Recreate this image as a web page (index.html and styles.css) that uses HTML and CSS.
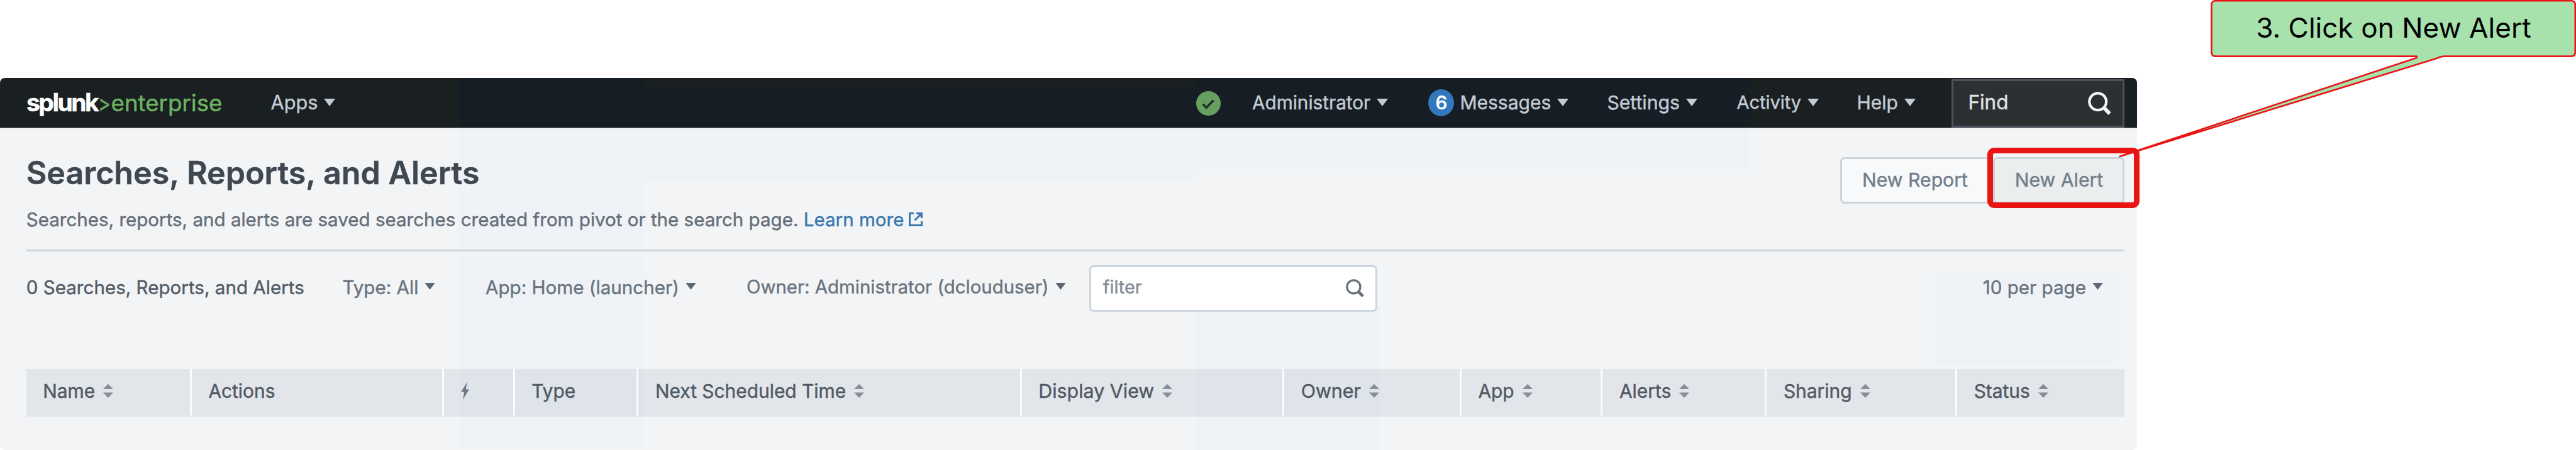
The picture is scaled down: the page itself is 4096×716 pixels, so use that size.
FILE: index.html
```html
<!DOCTYPE html>
<html lang="en">
<head>
<meta charset="utf-8">
<title>Searches, Reports, and Alerts</title>
<link rel="stylesheet" href="styles.css">
</head>
<body>
<svg class="symbols" width="0" height="0" aria-hidden="true">
  <symbol id="caret" viewBox="0 0 18 12"><path d="M0 0h18L9 12z" fill="currentColor"/></symbol>
  <symbol id="sort" viewBox="0 0 16 22"><path d="M0 8h16L8 0zM0 13.5h16L8 22z" fill="currentColor"/></symbol>
  <symbol id="search" viewBox="0 0 38 38"><ellipse cx="15.7" cy="15.7" rx="13.4" ry="13.4" fill="none" stroke="currentColor" stroke-width="4.2"/><path d="M25 25l9.5 9.8" fill="none" stroke="currentColor" stroke-width="6"/></symbol>
</svg>
<div class="page">
  <div class="app">
    <nav class="nav">
      <a class="logo"><span class="logo-brand">splunk</span><span class="logo-mark">&gt;</span><span class="logo-product">enterprise</span></a>
      <a class="nav-item apps">Apps<svg class="caret"><use href="#caret"/></svg></a>
      <svg class="health" viewBox="0 0 39 39"><circle cx="19.5" cy="19.5" r="19.5" fill="#669f60"/><path d="M10.6 20.8l5.6 5.4 11.4-11.8" fill="none" stroke="#20302a" stroke-width="3.6"/></svg>
      <a class="nav-item admin">Administrator<svg class="caret"><use href="#caret"/></svg></a>
      <span class="count-badge">6</span>
      <a class="nav-item">Messages<svg class="caret"><use href="#caret"/></svg></a>
      <a class="nav-item settings">Settings<svg class="caret"><use href="#caret"/></svg></a>
      <a class="nav-item activity">Activity<svg class="caret"><use href="#caret"/></svg></a>
      <a class="nav-item">Help<svg class="caret"><use href="#caret"/></svg></a>
      <div class="find">Find<svg class="find-icon"><use href="#search"/></svg></div>
    </nav>
    <main class="main">
      <header class="heading">
        <div class="heading-text">
          <h1 class="title">Searches, Reports, and Alerts</h1>
          <p class="desc">Searches, reports, and alerts are saved searches created from pivot or the search page. <a class="link">Learn more<svg class="external" viewBox="0 0 22 22"><path d="M8 1.5H1.500v19h19V14M9.500 12.500L19 3M12 1.500h8.500V9" fill="none" stroke="currentColor" stroke-width="3"/><path d="M13 1h8v8z" fill="currentColor"/></svg></a></p>
        </div>
        <div class="actions">
          <div class="btn btn-report">New Report</div>
          <div class="btn btn-alert">New Alert<span class="highlight"></span></div>
        </div>
      </header>
      <div class="filters">
        <span class="total">0 Searches, Reports, and Alerts</span>
        <span class="filter">Type: All<svg class="caret"><use href="#caret"/></svg></span>
        <span class="filter">App: Home (launcher)<svg class="caret"><use href="#caret"/></svg></span>
        <span class="filter owner">Owner: Administrator (dclouduser)<svg class="caret"><use href="#caret"/></svg></span>
        <div class="filter-box">filter<svg class="filter-icon"><use href="#search"/></svg></div>
        <span class="filter per-page">10 per page<svg class="caret"><use href="#caret"/></svg></span>
      </div>
      <div class="table-head">
        <div class="th">Name<svg class="sort"><use href="#sort"/></svg></div>
        <div class="th">Actions</div>
        <div class="th"><svg class="bolt" viewBox="0 0 13 28"><path d="M10 0L0 15.500h5.200L3 28l10-16.500H7.600z" fill="#6c7687"/></svg></div>
        <div class="th">Type</div>
        <div class="th">Next Scheduled Time<svg class="sort"><use href="#sort"/></svg></div>
        <div class="th wide">Display View<svg class="sort"><use href="#sort"/></svg></div>
        <div class="th wide">Owner<svg class="sort"><use href="#sort"/></svg></div>
        <div class="th">App<svg class="sort"><use href="#sort"/></svg></div>
        <div class="th">Alerts<svg class="sort"><use href="#sort"/></svg></div>
        <div class="th">Sharing<svg class="sort"><use href="#sort"/></svg></div>
        <div class="th">Status<svg class="sort"><use href="#sort"/></svg></div>
      </div>
    </main>
  </div>
  <svg class="callout-shape" viewBox="0 0 4096 716"><path d="M3523 1.200H4088Q4094.800 1.200 4094.800 8V83Q4094.800 89.600 4088 89.600H3886Q3880 89.600 3874 93L3369.500 249.200L3841 92.500Q3845 90.500 3842 89.600H3523Q3516.500 89.600 3516.500 83V8Q3516.500 1.200 3523 1.200Z" fill="#a7e2ad" stroke="#e91414" stroke-width="2.600" stroke-linejoin="bevel"/></svg>
  <div class="callout">3. Click on New Alert</div>
</div>
</body>
</html>
```
FILE: styles.css
```css
* { box-sizing: border-box; }
body { margin: 0; background: #fff; font-family: Inter, "Liberation Sans", sans-serif; }
.symbols { position: absolute; }
svg { flex: none; display: block; }
.page { position: relative; width: 4096px; height: 716px; padding-top: 124px; overflow: hidden; }

.app {
  width: 3397.5px; height: 591.5px; border-radius: 8px;
  -webkit-text-stroke: .45px;
  background:
    linear-gradient(#eff3f8, #eff3f8) 730px 79px / 293px 508px no-repeat,
    linear-gradient(#eff3f8, #eff3f8) 1023px 79px / 878px 84px no-repeat,
    linear-gradient(#eff3f8, #eff3f8) 1901px 79px / 881px 68px no-repeat,
    linear-gradient(#eff3f8, #eff3f8) 1901px 361px / 293px 231px no-repeat,
    linear-gradient(#eff3f8, #eff3f8) 3075px 310px / 293px 147px no-repeat,
    #f2f4f6;
}

.nav {
  display: grid; align-items: center; height: 79.5px; padding: 0 0 6px 42px;
  grid-template-columns: 388.5px 1471.5px 89px 280.4px 50px 234px 206px 191px 151px 275px;
  border-bottom: 1px solid #80858a; border-radius: 8px 8px 0 0;
  color: #c3cbd4; font-size: 30px; line-height: 36px;
  background:
    linear-gradient(#1a1f21, #1a1f21) 1023px 0 / 878px 15px no-repeat,
    linear-gradient(#161d24, #161d24) 730px 0 / 2052px 100% no-repeat,
    #1a1f22;
}
.nav-item { display: flex; align-items: center; gap: 10px; white-space: nowrap; }
.caret { width: 18px; height: 12px; }
.apps { font-size: 30.7px; }
.admin { font-size: 29.7px; }
.settings { font-size: 30.2px; }
.activity { font-size: 29px; }
.logo { display: flex; align-items: baseline; font-size: 36.7px; line-height: 44px; padding-top: 1px; white-space: nowrap; }
.logo-brand { color: #fff; font-weight: 700; font-size: 39px; letter-spacing: -2.5px; width: 113.5px; }
.logo-mark { color: #65a958; width: 21px; transform: scaleX(.82); transform-origin: 0 0; }
.logo-product { color: #6db561; }
.health { width: 39px; height: 39px; margin-top: 3px; }
.count-badge {
  width: 41px; height: 43px; border-radius: 50%; background: #3377bd; color: #fff;
  font-weight: 500; line-height: 43px; text-align: center;
}
.find {
  display: flex; justify-content: space-between; align-items: center; align-self: start;
  height: 77px; margin-top: 1.5px; padding: 0 17px 2px 23px;
  background: #2d3032; border: 3px solid #4d525d; color: #dfe2e5; font-size: 31.5px;
}
.find-icon { width: 38px; height: 38px; color: #f4f4f4; margin-top: 3px; }

.main { padding: 0 20px 0 41.7px; }
.heading {
  display: flex; justify-content: space-between; align-items: flex-start;
  height: 196px; border-bottom: 3px solid #d0d5db;
}
.title { margin: 41px 0 0; font-size: 50.2px; font-weight: 600; line-height: 60px; color: #3f4851; }
.desc { margin: 26.5px 0 0; display: flex; white-space: pre; font-size: 29.55px; line-height: 36px; color: #666f79; }
.link { display: flex; align-items: center; gap: 8px; color: #3a78ad; }
.external { width: 22px; height: 22px; }
.actions { display: flex; margin-top: 46px; }
.btn {
  height: 74px; border: 3px solid #cdd3db; border-radius: 7px; padding: 0 0 2px;
  display: flex; align-items: center; justify-content: center;
  font-size: 30.2px; line-height: 36px; color: #727e8b; white-space: nowrap;
}
.btn-report { width: 241px; padding-right: 3px; background: #f7f9fb; }
.btn-alert { width: 209px; padding-left: 2px; background: #ebeeee; position: relative; margin-left: 1.5px; }
.highlight {
  position: absolute; z-index: 3; left: -12px; top: -18px; width: 242px; height: 96px;
  border: 9px solid #e91414; border-radius: 11px;
}

.filters {
  display: grid; align-items: center; height: 187.3px; padding-top: 22.5px; align-content: start;
  grid-template-columns: 502.8px 227.5px 415px 544.8px 458.5px 1fr;
  font-size: 29.6px; line-height: 36px; color: #6a7480;
}
.total { color: #535c66; }
.filter { display: flex; align-items: center; gap: 10px; white-space: nowrap; }
.owner { font-size: 29.4px; }
.filters .caret { width: 17px; height: 11px; color: #5c6773; margin-top: -4px; }
.total, .filter { margin-top: -3px; }
.filter-box {
  display: flex; align-items: center; justify-content: space-between;
  height: 73.5px; padding: 0 17px 3px 19px; border: 3px solid #cdd4dc; border-radius: 7px; background: #fff;
  font-size: 28.8px; color: #818c97;
}
.filter-icon { width: 30px; height: 30px; color: #68727f; margin-top: 3px; }
.per-page { justify-self: end; margin-right: 33.5px; }

.table-head {
  display: grid; height: 76px; padding-bottom: 2px; background: rgba(96, 107, 137, .11);
  grid-template-columns: 263.2px 401.6px 112.2px 196.8px 609.3px 417.4px 281.8px 224.5px 261px 302.7px 1fr;
}
.th {
  display: flex; align-items: center; gap: 13px; padding: 0 0 3px 26.5px;
  border-right: 3px solid #fbfcfd; white-space: nowrap;
  font-size: 29.9px; line-height: 36px; color: #515a64;
}
.th:last-child { border-right: 0; }
.wide { font-size: 30.4px; }
.sort { width: 16px; height: 22px; color: #858f9b; }
.bolt { width: 13px; height: 28px; }

.callout-shape { position: absolute; z-index: 2; left: 0; top: 0; width: 4096px; height: 716px; }
.callout {
  position: absolute; z-index: 3; left: 3516px; top: 0; width: 580px; height: 91px;
  text-align: center; font-size: 44.2px; line-height: 89px; color: #000; white-space: nowrap;
}
```
